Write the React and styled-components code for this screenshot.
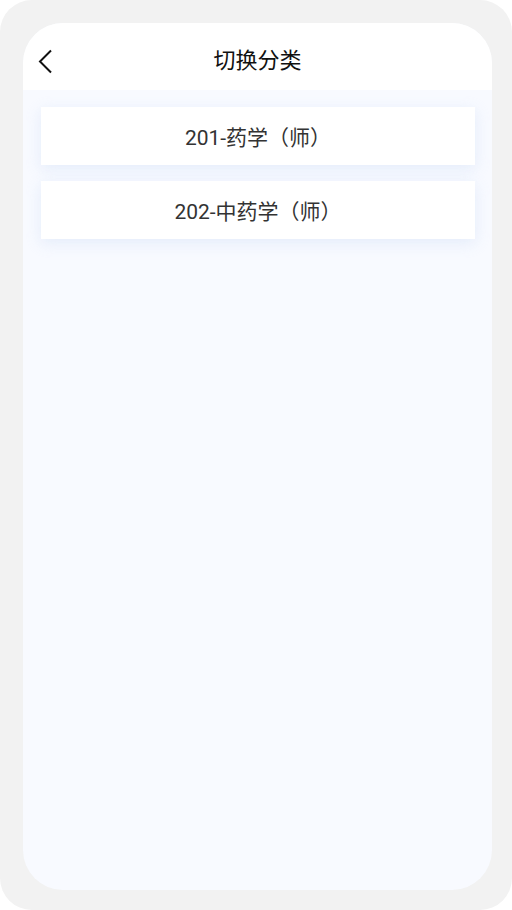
import React from "react";
import styled, { createGlobalStyle } from "styled-components";

const Global = createGlobalStyle`
  html, body { margin: 0; padding: 0; background: #ffffff; }
  body { font-family: Roboto, "Noto Sans CJK SC", sans-serif; }
  * { box-sizing: border-box; }
`;

const Frame = styled.div`
  width: 512px;
  height: 910px;
  background: #f2f2f2;
  border-radius: 32px;
  padding: 23px 20px 20px 23px;
  display: flex;
`;

const Screen = styled.div`
  flex: 1;
  background: #f8faff;
  border-radius: 40px;
  overflow: hidden;
  display: flex;
  flex-direction: column;
`;

const Header = styled.div`
  height: 67px;
  padding-top: 10px;
  background: #ffffff;
  display: grid;
  grid-template-columns: 60px 1fr 60px;
  align-items: center;
  flex-shrink: 0;
`;

const Back = styled.button`
  border: none;
  background: none;
  padding: 0 0 0 15px;
  display: flex;
  align-items: center;
  cursor: pointer;
`;

const Title = styled.h1`
  margin: 0;
  text-align: center;
  font-size: 22px;
  font-weight: 400;
  color: #111111;
  line-height: 1.2;
`;

const List = styled.div`
  display: flex;
  flex-direction: column;
  gap: 16px;
  padding: 17px 17px 0 18px;
`;

const Item = styled.div`
  height: 58px;
  background: #ffffff;
  display: flex;
  align-items: center;
  justify-content: center;
  font-size: 21px;
  color: #333333;
  box-shadow: 0 4px 14px rgba(205, 220, 245, 0.45);
`;

const items = ["201-药学（师）", "202-中药学（师）"];

export default function App() {
  return (
    <>
      <Global />
      <Frame>
        <Screen>
          <Header>
            <Back aria-label="返回">
              <svg width="16" height="26" viewBox="0 0 16 26">
                <path d="M13 1.5 L2 12.5 L13 23.5" fill="none" stroke="#111" strokeWidth="2" />
              </svg>
            </Back>
            <Title>切换分类</Title>
            <span />
          </Header>
          <List>
            {items.map((t) => (
              <Item key={t}>{t}</Item>
            ))}
          </List>
        </Screen>
      </Frame>
    </>
  );
}
